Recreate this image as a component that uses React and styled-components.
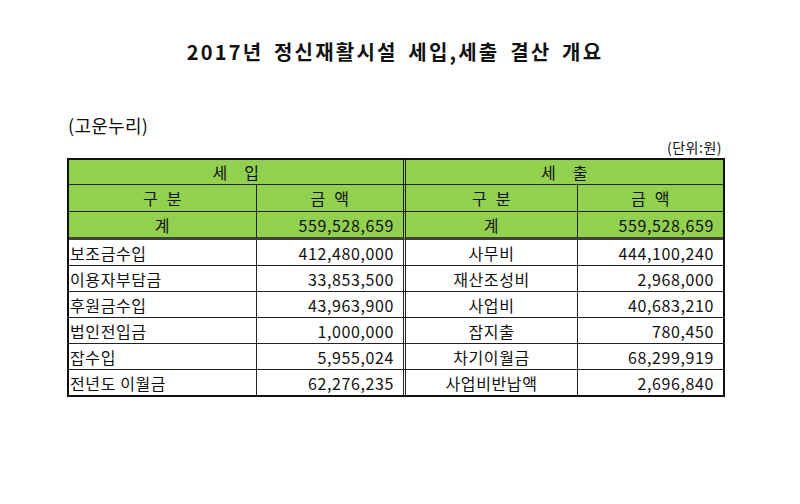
import React from "react";
import styled, { createGlobalStyle } from "styled-components";

const Global = createGlobalStyle`
  html, body { margin: 0; padding: 0; background: #fff; }
  body { font-family: "Noto Sans CJK KR", "Noto Sans", sans-serif; color: #111; }
`;

const Page = styled.div`
  width: 800px;
  height: 504px;
  background: #fff;
  box-sizing: border-box;
  padding: 40px 0 0 67px;
`;

const Content = styled.div`
  width: 658px;
  display: flex;
  flex-direction: column;
`;

const Title = styled.h1`
  margin: 0;
  font-size: 20px;
  line-height: 24px;
  font-weight: 700;
  letter-spacing: 2.2px;
  word-spacing: 4px;
  text-align: center;
  white-space: pre;
  padding-right: 2px;
`;

const Org = styled.div`
  margin-top: 51px;
  font-size: 18px;
  line-height: 20px;
  padding-left: 1px;
  letter-spacing: 0.3px;
`;

const Unit = styled.div`
  margin-top: 4px;
  font-size: 14px;
  line-height: 16px;
  text-align: right;
  padding-right: 3px;
  letter-spacing: 0.5px;
`;

const Frame = styled.div`
  margin-top: 3px;
  border: 2px solid #111;
  display: grid;
  grid-template-columns: 188px 149px 172px 145px;
`;

const Cell = styled.div`
  box-sizing: border-box;
  height: ${(p) => p.$h}px;
  background: ${(p) => (p.$green ? "#92d050" : "#fff")};
  border-bottom: ${(p) => (p.$thick ? "3px solid #3d4636" : p.$last ? "none" : "1px solid #222")};
  border-right: ${(p) => (p.$double ? "3px double #222" : p.$end ? "none" : "1px solid #222")};
  grid-column: ${(p) => (p.$span ? `span ${p.$span}` : "auto")};
  display: flex;
  align-items: center;
  justify-content: ${(p) => (p.$align === "left" ? "flex-start" : p.$align === "right" ? "flex-end" : "center")};
  padding: ${(p) => (p.$align === "left" ? "0 0 0 1px" : p.$align === "right" ? "0 9px 0 0" : "0")};
  font-size: 16px;
  letter-spacing: 0.6px;
  white-space: pre;
  overflow: hidden;
`;

const Num = styled.span`
  font-size: 16px;
  letter-spacing: 0.6px;
  font-variant-numeric: tabular-nums;
`;

const rowsData = [
  ["보조금수입", "412,480,000", "사무비", "444,100,240"],
  ["이용자부담금", "33,853,500", "재산조성비", "2,968,000"],
  ["후원금수입", "43,963,900", "사업비", "40,683,210"],
  ["법인전입금", "1,000,000", "잡지출", "780,450"],
  ["잡수입", "5,955,024", "차기이월금", "68,299,919"],
  ["전년도 이월금", "62,276,235", "사업비반납액", "2,696,840"],
];

export default function App() {
  return (
    <>
      <Global />
      <Page>
        <Content>
          <Title>2017년 정신재활시설 세입,세출 결산 개요</Title>
          <Org>(고운누리)</Org>
          <Unit>(단위:원)</Unit>
          <Frame>
            <Cell $h={25} $green $span={2} $double>세　입</Cell>
            <Cell $h={25} $green $span={2} $end>세　출</Cell>

            <Cell $h={27} $green>구  분</Cell>
            <Cell $h={27} $green $double>금  액</Cell>
            <Cell $h={27} $green>구  분</Cell>
            <Cell $h={27} $green $end>금  액</Cell>

            <Cell $h={28} $green $thick>계</Cell>
            <Cell $h={28} $green $thick $double $align="right"><Num>559,528,659</Num></Cell>
            <Cell $h={28} $green $thick>계</Cell>
            <Cell $h={28} $green $thick $end $align="right"><Num>559,528,659</Num></Cell>

            {rowsData.map((r, i) => {
              const last = i === rowsData.length - 1;
              const h = last ? 25 : 26;
              return (
                <React.Fragment key={i}>
                  <Cell $h={h} $last={last} $align="left">{r[0]}</Cell>
                  <Cell $h={h} $last={last} $double $align="right"><Num>{r[1]}</Num></Cell>
                  <Cell $h={h} $last={last}>{r[2]}</Cell>
                  <Cell $h={h} $last={last} $end $align="right"><Num>{r[3]}</Num></Cell>
                </React.Fragment>
              );
            })}
          </Frame>
        </Content>
      </Page>
    </>
  );
}
